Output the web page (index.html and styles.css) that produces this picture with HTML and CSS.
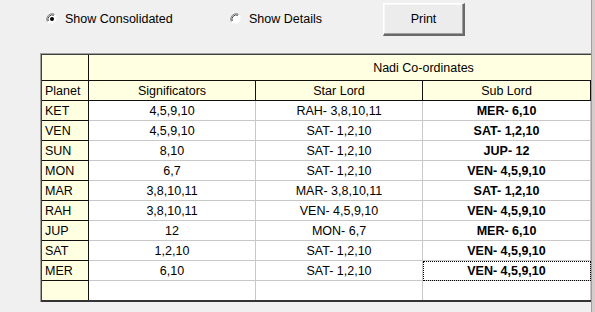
FILE: index.html
```html
<!DOCTYPE html>
<html>
<head>
<meta charset="utf-8">
<link rel="stylesheet" href="styles.css">
</head>
<body>
<div class="window">
  <div class="toolbar">
    <label class="radio radio-first">
      <svg class="radio-icon" width="12" height="12" viewBox="0 0 12 12">
        <circle cx="6" cy="6" r="5.5" fill="#ffffff"/>
        <path d="M1.2 8.5 A5.5 5.5 0 0 1 8.5 1.2" fill="none" stroke="#808080" stroke-width="1"/>
        <path d="M2.2 8 A4.5 4.5 0 0 1 8 2.2" fill="none" stroke="#404040" stroke-width="1"/>
        <path d="M10.8 3.5 A5.5 5.5 0 0 1 3.5 10.8" fill="none" stroke="#e8e8e8" stroke-width="1"/>
        <circle cx="6" cy="6" r="2" fill="#000000"/>
      </svg>
      <span>Show Consolidated</span>
    </label>
    <label class="radio radio-second">
      <svg class="radio-icon" width="12" height="12" viewBox="0 0 12 12">
        <circle cx="6" cy="6" r="5.5" fill="#ffffff"/>
        <path d="M1.2 8.5 A5.5 5.5 0 0 1 8.5 1.2" fill="none" stroke="#808080" stroke-width="1"/>
        <path d="M2.2 8 A4.5 4.5 0 0 1 8 2.2" fill="none" stroke="#404040" stroke-width="1"/>
        <path d="M10.8 3.5 A5.5 5.5 0 0 1 3.5 10.8" fill="none" stroke="#e8e8e8" stroke-width="1"/>
      </svg>
      <span>Show Details</span>
    </label>
    <button class="btn" type="button">Print</button>
  </div>

  <div class="grid">
    <div class="cells">
      <div class="cell fixed"></div>
      <div class="cell fixed head span">Nadi Co-ordinates</div>

      <div class="cell fixed name">Planet</div>
      <div class="cell fixed head">Significators</div>
      <div class="cell fixed head">Star Lord</div>
      <div class="cell fixed head">Sub Lord</div>
      <div class="cell fixed head"></div>

      <div class="cell fixed name">KET</div>
      <div class="cell">4,5,9,10</div>
      <div class="cell">RAH- 3,8,10,11</div>
      <div class="cell bold">MER- 6,10</div>
      <div class="cell"></div>

      <div class="cell fixed name">VEN</div>
      <div class="cell">4,5,9,10</div>
      <div class="cell">SAT- 1,2,10</div>
      <div class="cell bold">SAT- 1,2,10</div>
      <div class="cell"></div>

      <div class="cell fixed name">SUN</div>
      <div class="cell">8,10</div>
      <div class="cell">SAT- 1,2,10</div>
      <div class="cell bold">JUP- 12</div>
      <div class="cell"></div>

      <div class="cell fixed name">MON</div>
      <div class="cell">6,7</div>
      <div class="cell">SAT- 1,2,10</div>
      <div class="cell bold">VEN- 4,5,9,10</div>
      <div class="cell"></div>

      <div class="cell fixed name">MAR</div>
      <div class="cell">3,8,10,11</div>
      <div class="cell">MAR- 3,8,10,11</div>
      <div class="cell bold">SAT- 1,2,10</div>
      <div class="cell"></div>

      <div class="cell fixed name">RAH</div>
      <div class="cell">3,8,10,11</div>
      <div class="cell">VEN- 4,5,9,10</div>
      <div class="cell bold">VEN- 4,5,9,10</div>
      <div class="cell"></div>

      <div class="cell fixed name">JUP</div>
      <div class="cell">12</div>
      <div class="cell">MON- 6,7</div>
      <div class="cell bold">MER- 6,10</div>
      <div class="cell"></div>

      <div class="cell fixed name">SAT</div>
      <div class="cell">1,2,10</div>
      <div class="cell">SAT- 1,2,10</div>
      <div class="cell bold">VEN- 4,5,9,10</div>
      <div class="cell"></div>

      <div class="cell fixed name">MER</div>
      <div class="cell">6,10</div>
      <div class="cell">SAT- 1,2,10</div>
      <div class="cell bold focus">VEN- 4,5,9,10</div>
      <div class="cell"></div>

      <div class="cell fixed name"></div>
      <div class="cell"></div>
      <div class="cell"></div>
      <div class="cell"></div>
      <div class="cell"></div>
    </div>
  </div>
</div>
<div class="frame"></div>
</body>
</html>
```

FILE: styles.css
```css
html, body {
  margin: 0;
  padding: 0;
}

body {
  display: flex;
  width: 595px;
  height: 312px;
  overflow: hidden;
  background: #f0f0f0;
  font-family: "Liberation Sans", Arial, sans-serif;
  font-size: 12.5px;
  color: #000;
}

.window {
  width: 591px;
  height: 312px;
  overflow: hidden;
  background: #f0f0f0;
  flex: none;
}

.frame {
  flex: none;
  width: 3px;
  border-left: 1px solid #a89a9a;
  background: #d8cbcb;
}

.toolbar {
  display: flex;
  align-items: flex-start;
  height: 50px;
  padding-top: 3px;
}

.radio {
  display: flex;
  align-items: center;
  gap: 7px;
  height: 30px;
  padding-top: 1px;
  flex: none;
}

.radio-first {
  margin-left: 46px;
  width: 184px;
}

.radio-second {
  width: 153px;
}

.radio-icon {
  display: block;
  flex: none;
}

.btn {
  flex: none;
  width: 82px;
  height: 33px;
  margin: 0;
  padding: 0;
  font-family: "Liberation Sans", Arial, sans-serif;
  font-size: 12.5px;
  color: #000;
  background: #ececec;
  border-style: solid;
  border-width: 1px 2px 2px 1px;
  border-color: #ffffff #696969 #696969 #ffffff;
  box-shadow: inset -1px -1px 0 #a0a0a0, inset 1px 1px 0 #f8f8f8;
}

.grid {
  margin-left: 40px;
  width: 800px;
  border-top: 1px solid #a0a0a0;
  border-left: 1px solid #a0a0a0;
}

.cells {
  display: grid;
  grid-template-columns: 47px 167px 167px 168px 167px;
  grid-template-rows: 26px repeat(11, 20px);
  height: 245px;
  overflow: hidden;
  border-top: 1px solid #404040;
  border-left: 1px solid #404040;
  border-bottom: 2px solid #333;
  background: #fff;
}

.cell {
  box-sizing: border-box;
  display: flex;
  align-items: center;
  justify-content: center;
  white-space: nowrap;
  border-right: 1px solid #c8c8c8;
  border-bottom: 1px solid #c8c8c8;
  background: #fff;
}

.fixed {
  background: #ffffe1;
  border-right-color: #111;
  border-bottom-color: #111;
}

.span {
  grid-column: 2 / span 4;
  border-right: none;
}

.name {
  justify-content: flex-start;
  padding-left: 3px;
}

.bold {
  font-weight: bold;
}

.focus {
  outline: 1px dotted #000;
  outline-offset: -1px;
}
```
